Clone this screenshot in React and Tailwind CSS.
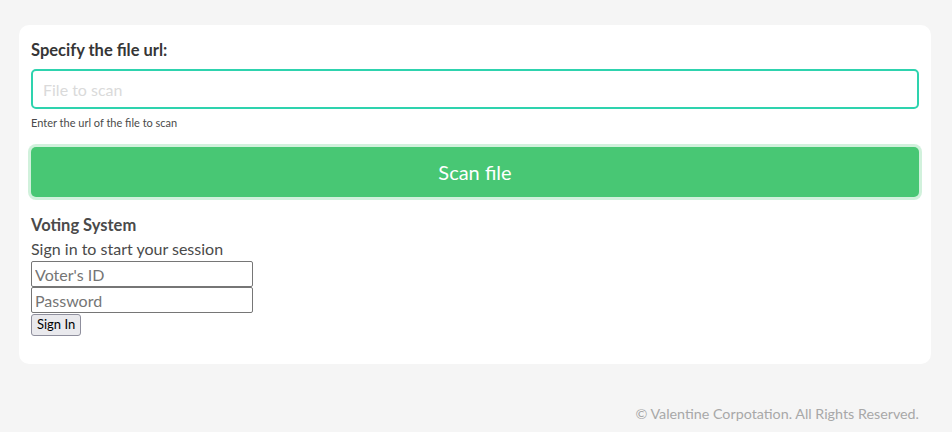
import React from 'react';

export default function App() {
  const font = { fontFamily: 'Lato, "Noto Sans", sans-serif' };
  return (
    <div className="min-h-[432px] bg-[#f5f5f5] pt-[25px] pl-[19px] pr-[21px]" style={font}>
      <div className="bg-white rounded-[10px] px-3 pt-[13px] pb-[28px]">
        <label className="block text-[16.5px] font-bold text-[#363636] leading-6">Specify the file url:</label>
        <input
          autoFocus
          className="mt-[7px] block w-full h-10 rounded-[5px] border-2 border-[#2ed3ae] px-[10px] text-[16px] text-[#363636] placeholder:text-[#dadada] outline-none caret-[#363636]"
          placeholder="File to scan"
        />
        <p className="mt-[6px] text-[11px] text-[#4a4a4a] leading-4">Enter the url of the file to scan</p>
        <button className="mt-[16px] block w-full h-[50px] rounded-[5px] bg-[#48c774] text-white text-[20px] shadow-[0_0_0_3px_rgba(72,199,116,0.25)]">
          Scan file
        </button>
        <div className="mt-[16px] text-[#4a4a4a]">
          <p className="text-[16.5px] font-bold leading-6">Voting System</p>
          <p className="text-[16px] leading-6">Sign in to start your session</p>
          <form className="flex flex-col items-start">
            <input
              className="w-[222px] h-[26px] border border-[#767676] rounded-[2px] px-[3px] text-[16px] placeholder:text-[#757575]"
              placeholder="Voter's ID"
            />
            <input
              type="password"
              className="w-[222px] h-[26px] border border-[#767676] rounded-[2px] px-[3px] text-[16px] placeholder:text-[#757575]"
              placeholder="Password"
            />
            <button
              type="button"
              className="mt-[1px] h-[22px] px-[5px] bg-[#e9e9ed] border border-[#8f8f9d] rounded-[3px] text-[13px] text-black"
            >
              Sign In
            </button>
          </form>
        </div>
      </div>
      <footer className="flex justify-end pr-[12px] pt-[39px] pb-[10px]">
        <p className="text-[14.3px] text-[#a8a8a8]">© Valentine Corpotation. All Rights Reserved.</p>
      </footer>
    </div>
  );
}
